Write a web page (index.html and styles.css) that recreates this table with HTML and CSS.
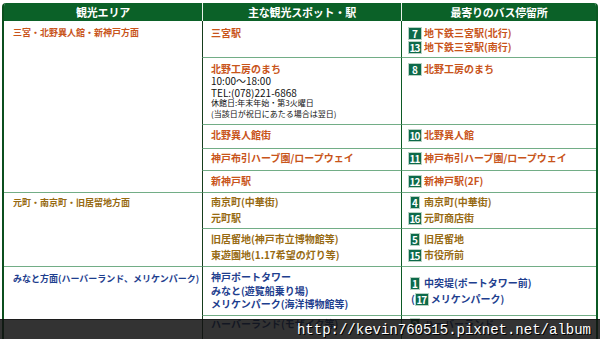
FILE: index.html
```html
<!DOCTYPE html>
<html lang="ja">
<head>
<meta charset="utf-8">
<title>観光エリア</title>
<link rel="stylesheet" href="styles.css">
</head>
<body>
<div class="frame">
  <div class="grid">
    <div class="hd">観光エリア</div>
    <div class="hd sep">主な観光スポット・駅</div>
    <div class="hd sep">最寄りのバス停留所</div>

    <div class="area o first span5 p5">三宮・北野異人館・新神戸方面</div>
    <div class="spot o first p5"><div class="l14">三宮駅</div></div>
    <div class="stop o first p5">
      <div class="l14"><span class="bn">7</span>地下鉄三宮駅(北行)</div>
      <div class="l14"><span class="bn dd">13</span>地下鉄三宮駅(南行)</div>
    </div>

    <div class="spot pk">
      <div class="o l12">北野工房のまち</div>
      <div class="k l12">10:00〜18:00</div>
      <div class="k l11">TEL:(078)221-6868</div>
      <div class="k sm l10">休館日:年末年始・第3火曜日</div>
      <div class="k sm l11">(当該日が祝日にあたる場合は翌日)</div>
    </div>
    <div class="stop o p4"><div class="l14"><span class="bn">8</span>北野工房のまち</div></div>

    <div class="spot o p3"><div class="l14">北野異人館街</div></div>
    <div class="stop o p3"><div class="l14"><span class="bn dd">10</span>北野異人館</div></div>

    <div class="spot o p2"><div class="l14">神戸布引ハーブ園/ロープウェイ</div></div>
    <div class="stop o p2"><div class="l14"><span class="bn dd">11</span>神戸布引ハーブ園/ロープウェイ</div></div>

    <div class="spot o p3"><div class="l14">新神戸駅</div></div>
    <div class="stop o p3"><div class="l14"><span class="bn dd">12</span>新神戸駅(2F)</div></div>

    <div class="area g span2 p3">元町・南京町・旧居留地方面</div>
    <div class="spot g p1">
      <div class="l16">南京町(中華街)</div>
      <div class="l16">元町駅</div>
    </div>
    <div class="stop g p1">
      <div class="l16"><span class="bn s">4</span>南京町(中華街)</div>
      <div class="l16"><span class="bn dd">16</span>元町商店街</div>
    </div>

    <div class="spot g p2">
      <div class="l16">旧居留地(神戸市立博物館等)</div>
      <div class="l16">東遊園地(1.17希望の灯り等)</div>
    </div>
    <div class="stop g p2">
      <div class="l16"><span class="bn s">5</span>旧居留地</div>
      <div class="l16"><span class="bn dd">15</span>市役所前</div>
    </div>

    <div class="area b span2 p5">みなと方面(ハーバーランド、メリケンパーク)</div>
    <div class="spot b p3">
      <div class="l13">神戸ポートタワー</div>
      <div class="l13">みなと(遊覧船乗り場)</div>
      <div class="l13">メリケンパーク(海洋博物館等)</div>
    </div>
    <div class="stop b p8">
      <div class="l16"><span class="bn s">1</span>中突堤(ポートタワー前)</div>
      <div class="l16"><span class="paren">(</span><span class="bn dd tight">17</span>メリケンパーク)</div>
    </div>

    <div class="spot b p1"><div class="l14">ハーバーランド(モザイク等)</div></div>
    <div class="stop b p1"><div class="l14"><span class="bn s">2</span>ハーバーランド</div></div>
  </div>
</div>
<div class="watermark">http://kevin760515.pixnet.net/album</div>
</body>
</html>
```
FILE: styles.css
```css
html, body {
  margin: 0;
  padding: 0;
}
body {
  width: 600px;
  height: 339px;
  overflow: hidden;
  background: #ffffff;
  position: relative;
  font-family: "Noto Sans CJK JP", "Noto Sans", sans-serif;
}
.frame {
  margin: 3px 0 0 2px;
  width: 592px;
  border-left: 2px solid #0b4f1e;
  border-right: 2px solid #0b5a24;
  border-top-left-radius: 4px;
  border-top-right-radius: 4px;
  overflow: hidden;
}
.grid {
  display: grid;
  grid-template-columns: 198px 199px 195px;
  grid-template-rows: 18px 36px 67px 24px 22px 22px 36px 38px 49px 40px;
}
.grid > div {
  box-sizing: border-box;
}
.hd {
  background: #0b6128;
  color: #ffffff;
  font-weight: 700;
  font-size: 11px;
  line-height: 18px;
  text-align: center;
  letter-spacing: -0.2px;
}
.hd.sep {
  border-left: 1px solid #e8f0ea;
}
.area {
  padding-left: 9px;
  font-size: 9px;
  font-weight: 700;
  line-height: 14px;
  border-top: 1px solid #72ad86;
}
.area.first {
  border-top: none;
}
.span5 { grid-row: span 5; }
.span2 { grid-row: span 2; }
.spot, .stop {
  border-left: 1px solid #163d1d;
  border-top: 1px solid #72ad86;
  font-size: 10px;
  font-weight: 700;
  white-space: nowrap;
}
.stop {
  border-left-color: #0b5a24;
}
.spot.first, .stop.first {
  border-top: none;
}
.spot { padding-left: 8px; }
.stop { padding-left: 7px; }
.p1 { padding-top: 1px; }
.p2 { padding-top: 2px; }
.p3 { padding-top: 3px; }
.p4 { padding-top: 4px; }
.p5 { padding-top: 5px; }
.p8 { padding-top: 8px; }
.pk { padding-top: 5px; }
.l10 { line-height: 10px; }
.l11 { line-height: 11px; }
.l12 { line-height: 12px; }
.l13 { line-height: 13.5px; }
.l14 { line-height: 14px; }
.l16 { line-height: 16px; }
.o { color: #c8541a; }
.g { color: #976a12; }
.b { color: #1e3e8e; }
.k { color: #111111; font-weight: 400; }
.sm { font-size: 8px; }
.bn {
  display: inline-block;
  width: 12px;
  height: 11px;
  margin-right: 3px;
  background: #0d6a4a;
  color: #ffffff;
  font-size: 10px;
  font-weight: 700;
  line-height: 11px;
  text-align: center;
  vertical-align: -1px;
  box-shadow: 0 0 0 1px #b9d3c4;
}
.bn.dd {
  letter-spacing: -1px;
  text-indent: -1px;
}
.bn.s {
  width: 8px;
  margin-left: 2px;
  margin-right: 5px;
}
.paren {
  margin-left: 2px;
  margin-right: 1px;
}
.bn.tight {
  margin-right: 3px;
}
.watermark {
  position: absolute;
  left: 0;
  top: 319px;
  width: 600px;
  height: 20px;
  box-sizing: border-box;
  padding-right: 9px;
  background: rgba(18, 18, 18, 0.86);
  border-top: 1px solid rgba(0, 0, 0, 0.45);
  color: #ffffff;
  font-family: "Liberation Mono", "DejaVu Sans Mono", monospace;
  font-size: 14px;
  line-height: 20px;
  text-align: right;
  text-shadow: 1px 1px 0 #000000;
}
```
